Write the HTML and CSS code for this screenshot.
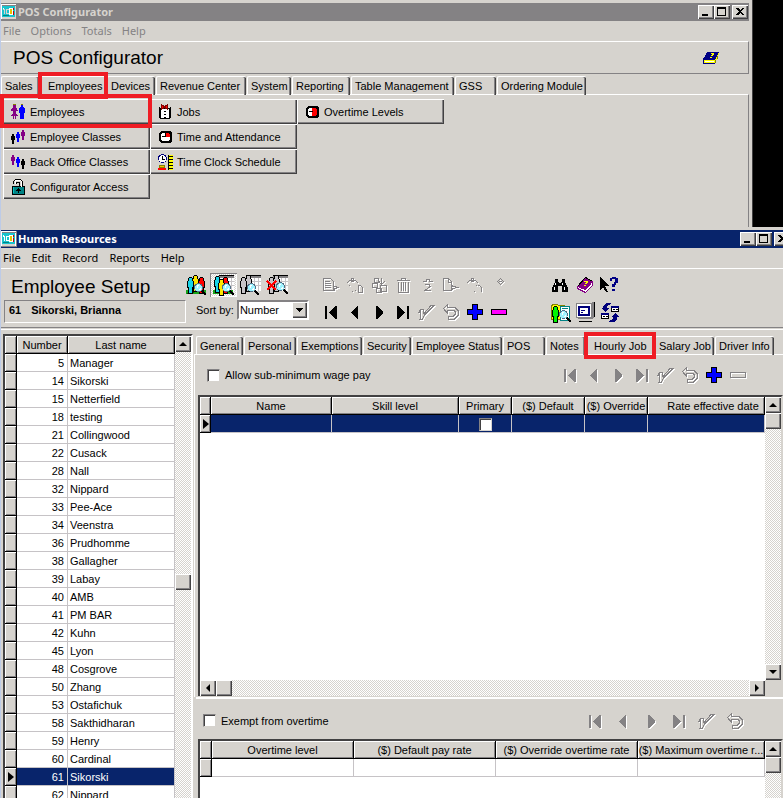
FILE: index.html
```html
<!DOCTYPE html>
<html lang="en">
<head>
<meta charset="utf-8">
<title>POS Configurator</title>
<link rel="stylesheet" href="styles.css">
</head>
<body>
<svg class="sprite" aria-hidden="true">
  <symbol id="app" viewBox="0 0 16 16"><path fill="#848284" d="M0 0h16v16H0z"/><path fill="#fff" d="M0 0h15v1H1v14H0z"/><path fill="#18c3ce" d="M1 2h13v11H1z"/><path fill="#d6d3ce" d="M1 13h13v2H1z"/><path d="M14 2h1v13h-1zM2 5h2v5H3V6H2zM5 5h3v1H6v3h2v1H5z"/><path fill="#fff" d="M2 4h1v1H2zM8 4h4v7H8z"/><path fill="#e7c300" d="M9 5h2v5H9z"/><path fill="#c00" d="M12 4h1v2h-1zM12 7h1v4h-1z"/><path fill="#008284" d="M2 11h6v1H2z"/></symbol>
  <symbol id="first" viewBox="0 0 24 24"><path d="M6 6h2v13H6zM18 6v13h-1l-7-6v-1l7-6z"/></symbol>
  <symbol id="prev" viewBox="0 0 24 24"><path d="M15 6v13h-1l-6-6v-1l6-6z"/></symbol>
  <symbol id="next" viewBox="0 0 24 24"><path d="M9 6v13h1l6-6v-1l-6-6z"/></symbol>
  <symbol id="last" viewBox="0 0 24 24"><path d="M16 6h2v13h-2zM6 6v13h1l7-6v-1L7 6z"/></symbol>
  <symbol id="check" viewBox="0 0 24 24"><path fill="none" stroke="currentColor" d="M4.500 10.500l2-1h2l.5 4 7-8h3l-9 9-3 5h-2l1-8-2 1z"/></symbol>
  <symbol id="undo" viewBox="0 0 24 24"><path fill="none" stroke="currentColor" d="M4.500 8.500l4-4v2.500h7l4 4v4l-4 4h-6v-3h5l2-2v-2l-1.500-1.500h-6.500v3z"/></symbol>
  <symbol id="plus" viewBox="0 0 24 24"><path fill="#0000ff" stroke="#000" d="M9.500 4.500h5v5h5v5h-5v5h-5v-5h-5v-5h5z"/></symbol>
  <symbol id="minus" viewBox="0 0 24 24"><path fill="#ff00ff" stroke="#000" d="M4.500 9.500h15v5h-15z"/></symbol>
  <symbol id="minus-off" viewBox="0 0 24 24"><path fill="none" stroke="currentColor" d="M4.500 9.500h15v5h-15z"/></symbol>
  <symbol id="body" viewBox="0 0 7 17"><path fill="#000" d="M2 0h3v1h1v3h1v7H6v6H1v-6H0V4h1V1h1z"/><path fill="currentColor" d="M2 1h3v3h1v6H5v6H2v-6H1V4h1z"/></symbol>
  <symbol id="lens" viewBox="0 0 12 12"><path d="M8 7l4 4-1 1-4-4z" fill="#000" stroke="#000"/><circle cx="4.500" cy="4.500" r="4" fill="#9ff3ff" stroke="#526d84"/><path fill="#fff" d="M3 2h2v1H4v2H3zM6 5h1v2H5V6h1z"/></symbol>
  <symbol id="sheet" viewBox="0 0 15 16"><path fill="#fff" d="M0 0h15v16H0z"/><path fill="#848284" d="M0 0h15v3H0z"/><path fill="#000" d="M0 0h15v1H0z"/><path fill="#c6c3c6" d="M0 6h15v1H0zM0 10h15v1H0zM4 3h1v13H4zM8 3h1v13H8zM12 3h1v13h-1z"/></symbol>
</svg>

<section class="window configurator">
  <header class="titlebar titlebar-off">
    <svg class="app-icon"><use href="#app"/></svg><h1>POS Configurator</h1>
    <div class="window-buttons">
      <button aria-label="Minimize"><svg viewBox="0 0 11 10"><path d="M2 7h6v2H2z"/></svg></button><button aria-label="Maximize"><svg viewBox="0 0 11 10"><path d="M1 0h9v9H1zM2 2v6h7V2z" fill-rule="evenodd"/></svg></button><button class="close" aria-label="Close"><svg viewBox="0 0 11 10"><path d="M2 1h2l2 2 2-2h2L7 4.500 10 8H8L6 6 4 8H2l3-3.500z"/></svg></button>
    </div>
  </header>
  <nav class="menu menu-off"><a href="#">File</a><a href="#">Options</a><a href="#">Totals</a><a href="#">Help</a></nav>
  <div class="heading">
    <h2>POS Configurator</h2>
    <button class="tool" aria-label="Help topics"><svg viewBox="0 0 24 24"><path fill="#000084" d="M9 6h11l-4 8H5z"/><path fill="#ffff00" d="M5 14h11l4-8v2l-4 9H5z"/><path fill="#fff" d="M6 15h9v1H6z"/><path fill="none" stroke="#000084" d="M4.500 17.500v-4l4-7M5 17.500h11"/><path fill="#ffff00" d="M11 8h1V7h3v2h-1v1h-2V9h1V8h-2zM11 11h2v1h-2z"/><path fill="#848200" d="M18 10h1v3h-1zM16 14h1v3h-1z"/></svg></button>
  </div>
  <div class="tabs config-tabs" role="tablist">
    <button role="tab">Sales</button><button role="tab" class="selected marked">Employees</button><button role="tab">Devices</button><button role="tab">Revenue Center</button><button role="tab">System</button><button role="tab">Reporting</button><button role="tab">Table Management</button><button role="tab">GSS</button><button role="tab">Ordering Module</button>
  </div>
  <div class="config-page">
    <div class="commands">
      <button class="marked"><svg viewBox="0 0 16 16"><g fill="#840084"><path d="M3 1h3v3H3zM2 4h5l1 3H1zM3 7h3v2l2 3H1l2-3zM3 12h1v3H3zM5 12h1v3H5z"/></g><path fill="#848200" d="M3 0h3v1H3zM11 0h2v1h-2z"/><path fill="#00f" d="M11 1h2v2h1v1h1v5h-1v6h-4V9H9V4h1V3h1z"/></svg>Employees</button>
      <button><svg viewBox="0 0 16 16"><path d="M2 5h2v2h1v4H4v4H2v-4H1V7h1z"/><path fill="#00f" d="M7 3h2v2h1v4H9v4H7V9H6V5h1z"/><path fill="#840084" d="M12 1h2v2h1v4h-1v4h-2V7h-1V3h1z"/></svg>Employee Classes</button>
      <button><svg viewBox="0 0 16 16"><path fill="#840084" d="M2 1h2v2h1v4H4v4H2V7H1V3h1z"/><path fill="#00f" d="M7 3h2v2h1v4H9v4H7V9H6V5h1z"/><path d="M12 5h2v2h1v4h-1v4h-2v-4h-1V7h1z"/></svg>Back Office Classes</button>
      <button><svg viewBox="0 0 16 16"><path fill="#008284" stroke="#000" d="M2.500 7.500h12v8h-12z"/><path fill="none" stroke="#000" d="M3.500 5V2.500l2-2h5l2 2v5M6.500 5V3.500h3v4"/><path fill="none" stroke="#fff" d="M5 5V2.500l1-1h4l1.500 1v5"/><path d="M8 9h1l2 3H9v2H8v-2H6z"/><path fill="#00c3c6" d="M3 8h1v6H3z"/></svg>Configurator Access</button>
      <button><svg viewBox="0 0 16 16"><path fill="#fff" stroke="#000" d="M3.500 4.500h9v10h-9z"/><path d="M2 3h1v11H2zM13 3h1v11h-1zM7 7h2v1H7zM7 10h2v1H7zM7 13h2v1H7z"/><path fill="red" stroke="#840000" d="M4.500 1l3 1.500 3-1.500v4l-3-1.500-3 1.500z"/></svg>Jobs</button>
      <button><svg viewBox="0 0 16 16"><path d="M4 2h9l2 2v8l-2 2H4l-2-2V4z"/><path fill="#fff" d="M5 4h3v4h5v2l-2 2H5l-1-2V6z"/><path fill="red" d="M9 4h2l2 2v2H9z"/><path d="M5 7h4v1H5z"/></svg>Time and Attendance</button>
      <button><svg viewBox="0 0 16 16"><circle cx="5.500" cy="4.500" r="4" fill="#fff" stroke="#00007b"/><path d="M5.500 2v3H8" fill="none" stroke="#000"/><path fill="#ffff00" d="M12 1h4v15h-4z"/><path d="M12 2h4v1h-4zM12 5h4v1h-4zM12 8h4v1h-4zM12 11h4v1h-4zM12 14h4v1h-4zM11 1h1v15h-1z"/><path fill="#ffc300" stroke="#848200" d="M2.500 11.500h5v2h-5z"/><path fill="red" d="M1 14h8v2H1z"/></svg>Time Clock Schedule</button>
      <button><svg viewBox="0 0 16 16"><path d="M4 2h9l2 2v8l-2 2H4l-2-2V4z"/><path fill="#fff" d="M5 4h3v8H5l-1-2V6z"/><path fill="red" d="M8 4h3l2 2v4l-2 2H8z"/><path d="M5 7h4v1H5z"/></svg>Overtime Levels</button>
    </div>
  </div>
</section>

<section class="window human-resources">
  <header class="titlebar">
    <svg class="app-icon"><use href="#app"/></svg><h1>Human Resources</h1>
    <div class="window-buttons">
      <button aria-label="Minimize"><svg viewBox="0 0 11 10"><path d="M2 7h6v2H2z"/></svg></button><button aria-label="Maximize"><svg viewBox="0 0 11 10"><path d="M1 0h9v9H1zM2 2v6h7V2z" fill-rule="evenodd"/></svg></button><button class="close" aria-label="Close"><svg viewBox="0 0 11 10"><path d="M2 1h2l2 2 2-2h2L7 4.500 10 8H8L6 6 4 8H2l3-3.500z"/></svg></button>
    </div>
  </header>
  <nav class="menu"><a href="#">File</a><a href="#">Edit</a><a href="#">Record</a><a href="#">Reports</a><a href="#">Help</a></nav>

  <div class="toolbar">
    <div class="record">
      <h2>Employee Setup</h2>
      <p class="record-name"><b>61</b><b>Sikorski, Brianna</b></p>
    </div>
    <div class="filters">
      <div class="filter-buttons">
        <button aria-label="All employees"><svg viewBox="0 0 22 22"><path fill="#18a218" d="M1 16h20v4H1z"/><path fill="#005100" d="M2 19h2v1H2zM7 18h2v1H7zM17 19h3v1h-3z"/><use href="#body" x="7" y="1" width="7" height="17" color="#ffe700"/><use href="#body" x="13" y="3" width="7" height="17" color="#f00"/><use href="#body" x="2" y="3" width="7" height="17" color="#18d3e7"/><use href="#lens" x="9" y="9" width="12" height="12"/></svg></button>
        <button class="pressed" aria-label="Active employees"><svg viewBox="0 0 22 22"><use href="#sheet" x="7" y="1" width="15" height="16"/><path fill="#18a218" d="M1 16h20v4H1z"/><use href="#body" x="10" y="3" width="7" height="17" color="#f00"/><use href="#body" x="2" y="2" width="7" height="17" color="#18d3e7"/><use href="#body" x="6" y="5" width="7" height="17" color="#ffe700"/><use href="#lens" x="10" y="9" width="12" height="12"/></svg></button>
        <button aria-label="Inactive employees"><svg viewBox="0 0 22 22"><use href="#sheet" x="7" y="1" width="15" height="16"/><use href="#body" x="6" y="1" width="7" height="17" color="#c6c3c6"/><use href="#body" x="1" y="3" width="7" height="17" color="#c6c3c6"/><use href="#lens" x="8" y="9" width="12" height="12"/></svg></button>
        <button aria-label="Terminated employees"><svg viewBox="0 0 22 22"><use href="#sheet" x="7" y="1" width="15" height="16"/><use href="#body" x="7" y="1" width="7" height="17" color="#c6c3c6"/><use href="#body" x="2" y="3" width="7" height="17" color="#c6c3c6"/><use href="#lens" x="10" y="8" width="12" height="12"/><path fill="none" stroke="red" stroke-width="2.500" d="M1 7l9 9M10 7l-9 9"/></svg></button>
      </div>
      <div class="sort"><label for="sort">Sort by:</label><span class="combo"><select id="sort"><option>Number</option></select></span></div>
    </div>
    <div class="tool-grid record-tools">
      <button class="tool off" aria-label="Copy"><svg viewBox="0 0 24 24"><path fill="none" stroke="currentColor" d="M4.500 5.500h7l3 3v9h-10zM6 8.500h5M6 10.500h6M6 12.500h6M6 14.500h6M14 12.500l5 2-3 1-1 2"/></svg></button>
      <button class="tool off" aria-label="Copy employee"><svg viewBox="0 0 24 24"><path fill="none" stroke="currentColor" d="M4 9.500l3-2 2 1 3-1 3 2M8.500 5.500h2v2h-2zM15.500 12.500h2l2 2v5h-4zM6 12.500h1M9 18.500h1M12 17.500h1"/></svg></button>
      <button class="tool off" aria-label="Combine"><svg viewBox="0 0 24 24"><path fill="none" stroke="currentColor" d="M7.500 5.500h4v4h-4zM14.500 5v6M12 8.500l2.500 3 3-3M5.500 10.500h5v4h-5zM13.500 12.500h6v6h-6zM9.500 15.500h5v4h-5z"/></svg></button>
      <button class="tool off" aria-label="Delete"><svg viewBox="0 0 24 24"><path fill="none" stroke="currentColor" d="M6 7.500h13M10.500 7V5.500h4V7M7.500 9v10.500h10V9M10.500 9v9M12.500 9v9M14.500 9v9"/></svg></button>
      <button class="tool off" aria-label="Duplicate"><svg viewBox="0 0 24 24"><path fill="none" stroke="currentColor" d="M8 8.500h3l1-2h2l1 2h3M10 11.500h4l1 2-5 4h6"/></svg></button>
      <button class="tool off" aria-label="New page"><svg viewBox="0 0 24 24"><path fill="none" stroke="currentColor" d="M4.500 5.500h5l3 3v9h-8zM9.500 6v3h3M12 12.500l6 2-4 1-2 2"/></svg></button>
      <button class="tool off" aria-label="Transfer"><svg viewBox="0 0 24 24"><path fill="none" stroke="currentColor" d="M4 9.500l3-2 2 1 3-1 3 2M8.500 5.500h2v2h-2zM14.500 12.500h2l2 2v4M11 18.500h1M13 12.500h1"/></svg></button>
      <button class="tool off" aria-label="Mark"><svg viewBox="0 0 24 24"><path fill="none" stroke="currentColor" d="M10.500 8.500l3-3 3 3-3 3zM12 8.500h3"/></svg></button>
      <button class="tool" aria-label="First"><svg><use href="#first"/></svg></button><button class="tool" aria-label="Previous"><svg><use href="#prev"/></svg></button><button class="tool" aria-label="Next"><svg><use href="#next"/></svg></button><button class="tool" aria-label="Last"><svg><use href="#last"/></svg></button><button class="tool off" aria-label="Save"><svg><use href="#check"/></svg></button><button class="tool off" aria-label="Undo"><svg><use href="#undo"/></svg></button><button class="tool" aria-label="Add"><svg><use href="#plus"/></svg></button><button class="tool" aria-label="Remove"><svg><use href="#minus"/></svg></button>
    </div>
    <div class="tool-grid window-tools">
      <button class="tool" aria-label="Find"><svg viewBox="0 0 24 24"><path d="M7 6h3v3h1v1h2V9h1V6h3v3l3 6v4h-6v-6h-4v6H4v-4l3-6z"/><path fill="#fff" d="M7 10h1v2H7zM6 14h1v3H6zM14 10h1v2h-1zM16 14h1v3h-1z"/></svg></button>
      <button class="tool" aria-label="Manual"><svg viewBox="0 0 24 24"><path fill="#840084" stroke="#000" d="M4.500 13.500l8-9 7 4-7 8z"/><path fill="#fff" stroke="#840084" d="M4.500 13.500l8 3 7-8v4l-7 7-8-4z"/><path fill="#ffff00" d="M10 9h1V8h4v2h-1v1h-2v-1h1V9h-3zM11 12h2v1h-2z"/></svg></button>
      <button class="tool" aria-label="What's this?"><svg viewBox="0 0 24 24"><path d="M2 4l9 9H7l3 6H8l-3-5-3 3z"/><path fill="#000084" d="M12 5h2V4h4v1h2v5h-2v2h-1v2h-3v-3h2V9h1V6h-3v2h-2zM14 16h3v2h-3z"/></svg></button>
      <button class="tool" aria-label="Employee lookup"><svg viewBox="0 0 24 24"><path fill="#ffff00" stroke="#848200" d="M3.500 19V5.500l2-1h4l1 1h6V19z"/><path fill="#fff" stroke="#008284" d="M12.500 6.500h9v14h-9z"/><path fill="#008284" d="M14 8h6v1h-6z"/><use href="#body" x="4" y="6" width="7" height="17" color="#00f300"/><use href="#lens" x="11" y="10" width="12" height="12"/></svg></button>
      <button class="tool" aria-label="Workstation"><svg viewBox="0 0 24 24"><path fill="#fff" stroke="#848284" d="M3.500 3.500h15v14h-15z"/><path fill="#848284" d="M19 2h2v15l-2 2H5v-1h14z"/><path d="M21 2h1v15h-1zM6 21h13v1H6z"/><path fill="#d6d3ce" d="M7 19h11v2H7z"/><path fill="#fff" stroke="#00007b" stroke-width="2" d="M6 7h10v8H6z"/><path fill="#00007b" d="M5 6h12v2H5zM8 10h4v1H8zM8 12h2v1H8z"/></svg></button>
      <button class="tool" aria-label="Refresh"><svg viewBox="0 0 24 24"><path fill="#fff" stroke="#000" d="M13.500 6.500h7v5h-7zM3.500 13.500h7v5h-7z"/><path d="M15 9h2v1h-2zM18 9h2v1h-2zM5 16h2v1H5zM8 16h2v1H8z"/><path fill="#00007b" d="M13 6h8v2h-8zM3 13h8v2H3zM5 6l3-3h5v1l-4 2v2h2l-4 4-4-4h2zM19 19l-3 3h-5v-1l4-2v-2h-2l4-4 4 4h-2z"/></svg></button>
    </div>
  </div>

  <div class="workspace">
    <aside class="employee-list">
      <table class="grid list">
        <colgroup><col class="mark"><col class="number"><col class="name"></colgroup>
        <thead><tr><th></th><th>Number</th><th>Last name</th></tr></thead>
        <tbody>
          <tr><th></th><td>5</td><td>Manager</td></tr>
          <tr><th></th><td>14</td><td>Sikorski</td></tr>
          <tr><th></th><td>15</td><td>Netterfield</td></tr>
          <tr><th></th><td>18</td><td>testing</td></tr>
          <tr><th></th><td>21</td><td>Collingwood</td></tr>
          <tr><th></th><td>22</td><td>Cusack</td></tr>
          <tr><th></th><td>28</td><td>Nall</td></tr>
          <tr><th></th><td>32</td><td>Nippard</td></tr>
          <tr><th></th><td>33</td><td>Pee-Ace</td></tr>
          <tr><th></th><td>34</td><td>Veenstra</td></tr>
          <tr><th></th><td>36</td><td>Prudhomme</td></tr>
          <tr><th></th><td>38</td><td>Gallagher</td></tr>
          <tr><th></th><td>39</td><td>Labay</td></tr>
          <tr><th></th><td>40</td><td>AMB</td></tr>
          <tr><th></th><td>41</td><td>PM BAR</td></tr>
          <tr><th></th><td>42</td><td>Kuhn</td></tr>
          <tr><th></th><td>45</td><td>Lyon</td></tr>
          <tr><th></th><td>48</td><td>Cosgrove</td></tr>
          <tr><th></th><td>50</td><td>Zhang</td></tr>
          <tr><th></th><td>53</td><td>Ostafichuk</td></tr>
          <tr><th></th><td>58</td><td>Sakthidharan</td></tr>
          <tr><th></th><td>59</td><td>Henry</td></tr>
          <tr><th></th><td>60</td><td>Cardinal</td></tr>
          <tr class="current"><th></th><td>61</td><td>Sikorski</td></tr>
          <tr><th></th><td>62</td><td>Nippard</td></tr>
        </tbody>
      </table>
      <div class="scroll"><button class="up" aria-label="Scroll up"></button><span class="before"></span><span class="thumb"></span><span class="after"></span></div>
    </aside>

    <main class="details">
      <div class="tabs detail-tabs" role="tablist">
        <button role="tab">General</button><button role="tab">Personal</button><button role="tab">Exemptions</button><button role="tab">Security</button><button role="tab">Employee Status</button><button role="tab">POS</button><button role="tab">Notes</button><button role="tab" class="selected marked">Hourly Job</button><button role="tab">Salary Job</button><button role="tab">Driver Info</button>
      </div>
      <div class="jobs">
        <div class="bar">
          <label><input type="checkbox">Allow sub-minimum wage pay</label>
          <div class="bar-tools">
            <button class="tool off" aria-label="First"><svg><use href="#first"/></svg></button><button class="tool off" aria-label="Previous"><svg><use href="#prev"/></svg></button><button class="tool off" aria-label="Next"><svg><use href="#next"/></svg></button><button class="tool off" aria-label="Last"><svg><use href="#last"/></svg></button><button class="tool off" aria-label="Save"><svg><use href="#check"/></svg></button><button class="tool off" aria-label="Undo"><svg><use href="#undo"/></svg></button><button class="tool" aria-label="Add"><svg><use href="#plus"/></svg></button><button class="tool off" aria-label="Remove"><svg><use href="#minus-off"/></svg></button>
          </div>
        </div>
        <div class="sheet job-sheet">
          <div class="sheet-body">
            <table class="grid job-grid">
              <colgroup><col class="mark"><col class="job"><col class="skill"><col class="primary"><col class="default"><col class="override"><col></colgroup>
              <thead><tr><th></th><th>Name</th><th>Skill level</th><th>Primary</th><th>($) Default</th><th>($) Override</th><th class="date">Rate effective date</th></tr></thead>
              <tbody><tr class="current"><th></th><td></td><td></td><td class="center"><input type="checkbox" aria-label="Primary"></td><td></td><td></td><td></td></tr></tbody>
            </table>
          </div>
          <div class="scroll"><button class="up" aria-label="Scroll up"></button><span class="thumb"></span><span class="after"></span><button class="down" aria-label="Scroll down"></button></div>
          <div class="scroll across"><button class="left" aria-label="Scroll left"></button><span class="thumb"></span><span class="after"></span><button class="right" aria-label="Scroll right"></button></div>
        </div>
      </div>
      <div class="overtime">
        <div class="bar">
          <label><input type="checkbox">Exempt from overtime</label>
          <div class="bar-tools">
            <button class="tool off" aria-label="First"><svg><use href="#first"/></svg></button><button class="tool off" aria-label="Previous"><svg><use href="#prev"/></svg></button><button class="tool off" aria-label="Next"><svg><use href="#next"/></svg></button><button class="tool off" aria-label="Last"><svg><use href="#last"/></svg></button><button class="tool off" aria-label="Save"><svg><use href="#check"/></svg></button><button class="tool off" aria-label="Undo"><svg><use href="#undo"/></svg></button>
          </div>
        </div>
        <div class="sheet">
          <div class="sheet-body">
            <table class="grid overtime-grid">
              <colgroup><col class="mark"><col class="rate"><col class="rate"><col class="rate"><col></colgroup>
              <thead><tr><th></th><th>Overtime level</th><th>($) Default pay rate</th><th>($) Override overtime rate</th><th>($) Maximum overtime r...</th></tr></thead>
              <tbody><tr><th></th><td></td><td></td><td></td><td></td></tr></tbody>
            </table>
          </div>
          <div class="scroll"><button class="up" aria-label="Scroll up"></button><span class="thumb"></span><span class="after"></span></div>
        </div>
      </div>
    </main>
  </div>
</section>
</body>
</html>
```
FILE: styles.css
```css
:root {
  --face: #d6d3ce;
  --shade: #848284;
  --dark: #424142;
  --navy: #08246b;
  --line: #c6c3c6;
  --red: #ef1c24;
}

* { box-sizing: border-box; }

body {
  margin: 0;
  height: 100vh;
  display: flex;
  flex-direction: column;
  overflow: hidden;
  background: #000;
  color: #000;
  font: 11px/16px "Liberation Sans", Arial, sans-serif;
}

h1, h2, p { margin: 0; }
button, select, input { font: inherit; color: inherit; margin: 0; }
button { padding: 0; border: 0; background: none; text-align: left; white-space: nowrap; }
svg { display: block; fill: currentColor; shape-rendering: crispEdges; }
.sprite { position: absolute; width: 0; height: 0; }

/* Window frame */
.window { background: var(--face); border-left: 1px solid #bdcbe7; }
.configurator {
  flex: 0 0 227px;
  display: flex;
  flex-direction: column;
  margin-right: 30px;
  padding-right: 3px;
  border-right: 1px solid var(--dark);
}
.human-resources {
  flex: 1;
  min-height: 0;
  display: flex;
  flex-direction: column;
}
.titlebar {
  flex: none;
  display: flex;
  align-items: center;
  height: 21px;
  border-top: 3px solid var(--face);
  background: var(--navy);
  color: #fff;
}
.titlebar-off { background: var(--shade); color: var(--face); }
.human-resources { box-shadow: inset 0 1px #fff; }
.titlebar h1 { flex: 1; font: bold 11px/16px "Noto Sans", sans-serif; }
.app-icon { width: 16px; height: 16px; margin-right: 1px; }
.window-buttons { display: flex; padding-right: 1px; }
.human-resources .window-buttons { margin-right: -8px; }
.window-buttons button {
  width: 16px;
  height: 14px;
  padding: 1px 2px;
  background: var(--face);
  color: #000;
  box-shadow: inset 1px 1px #fff, inset -1px -1px var(--dark), inset -2px -2px var(--shade);
}
.window-buttons svg { width: 11px; height: 10px; }
.window-buttons .close { margin-left: 2px; }

.menu {
  flex: none;
  display: flex;
  gap: 11px;
  height: 20px;
  padding-left: 2px;
  font: 11px/20px "Noto Sans", sans-serif;
}
.menu a { color: inherit; text-decoration: none; }
.menu-off { gap: 10px; color: var(--shade); }

.heading {
  flex: none;
  display: flex;
  align-items: center;
  justify-content: space-between;
  height: 33px;
  margin-bottom: 2px;
  padding: 0 25px 0 12px;
  border: 1px solid var(--shade);
  border-top-color: #fff;
  border-left: 0;
}
h2 { font: 19px/24px "Liberation Sans", Arial, sans-serif; }

.tool { width: 24px; height: 24px; }
.tool svg { width: 24px; height: 24px; }
.off { color: var(--shade); }
.off svg { filter: drop-shadow(1px 1px 0 #fff); }

/* Tabs */
.tabs { flex: none; display: grid; height: 18px; }
.tabs button {
  position: relative;
  margin-right: 1px;
  padding-left: 3px;
  line-height: 18px;
  border-top: 1px solid #fff;
  border-left: 1px solid #fff;
  border-radius: 2px 2px 0 0;
  box-shadow: inset -1px 0 var(--dark), inset -2px 0 var(--shade);
}
.tabs .selected { line-height: 14px; padding-left: 7px; box-shadow: none; }
.config-tabs { grid-template-columns: 39px 67px 49px 91px 45px 59px 104px 42px 90px; }
.detail-tabs {
  grid-template-columns: 48px 53px 66px 49px 91px 43px 40px 69px 60px 60px;
  padding-left: 3px;
}

.marked { position: relative; }
.marked::after {
  content: "";
  position: absolute;
  z-index: 1;
  inset: -5px -2px -4px -3px;
  border: 4px solid var(--red);
  pointer-events: none;
}

/* Configurator commands */
.config-page {
  flex: 1;
  padding: 4px 0 0 2px;
  border-top: 1px solid #fff;
  border-right: 1px solid var(--shade);
}
.commands {
  display: grid;
  grid-template: repeat(4, 25px) / repeat(3, 147px);
  grid-auto-flow: column;
}
.commands button:nth-of-type(8) { grid-area: 1 / 3; }
.commands button {
  display: flex;
  align-items: center;
  gap: 4px;
  padding: 1px 0 0 7px;
  box-shadow: inset 1px 1px #fff, inset -1px -1px var(--dark), inset -2px -2px var(--shade);
}
.commands svg { width: 16px; height: 16px; }

/* Toolbar */
.toolbar {
  flex: none;
  display: flex;
  height: 60px;
  padding-top: 4px;
  border-top: 1px solid #fff;
  border-bottom: 1px solid var(--shade);
}
.record { width: 182px; padding: 2px 0 0 3px; }
.record h2 { padding: 0 0 1px 7px; }
.record-name {
  display: flex;
  gap: 10px;
  height: 23px;
  margin-right: -3px;
  padding-left: 4px;
  line-height: 18px;
  border: 1px solid #fff;
  border-top-color: var(--shade);
  border-left-color: var(--shade);
}
.filters { width: 136px; }
.filter-buttons { display: flex; }
.filter-buttons button { width: 27px; height: 24px; padding: 1px 2px; }
.filter-buttons svg { width: 22px; height: 22px; }
.filter-buttons .pressed {
  background: repeating-conic-gradient(#fff 0 25%, var(--face) 0 50%) 0 0 / 2px 2px;
  box-shadow: inset 1px 1px var(--shade), inset -1px -1px #fff;
}
.sort { display: flex; align-items: center; gap: 3px; padding: 3px 0 0 13px; }
.combo { position: relative; width: 72px; height: 20px; }
.combo select {
  appearance: none;
  width: 100%;
  height: 100%;
  padding: 0 0 0 1px;
  border: 2px solid #fff;
  border-top-color: var(--shade);
  border-left-color: var(--shade);
  border-radius: 0;
  background: #fff;
}
.combo::after {
  content: "";
  position: absolute;
  top: 2px;
  right: 2px;
  width: 15px;
  height: 16px;
  background: linear-gradient(#000, #000) 4px 6px / 7px 1px no-repeat, linear-gradient(#000, #000) 5px 7px / 5px 1px no-repeat, linear-gradient(#000, #000) 6px 8px / 3px 1px no-repeat, linear-gradient(#000, #000) 7px 9px / 1px 1px no-repeat, var(--face);
  box-shadow: inset 1px 1px #fff, inset -1px -1px var(--dark), inset -2px -2px var(--shade);
  pointer-events: none;
}
.tool-grid { display: grid; align-content: start; row-gap: 3px; }
.record-tools { grid-template-columns: repeat(8, 24px); }
.window-tools { grid-template-columns: repeat(3, 25px); margin-left: 37px; }

/* Workspace */
.workspace {
  flex: 1;
  min-height: 0;
  display: flex;
  margin-top: 1px;
  border-top: 1px solid #fff;
}
.employee-list {
  flex: none;
  display: flex;
  margin: 4px 0 0 2px;
  border: 2px solid var(--dark);
  border-right: 2px solid #fff;
  border-bottom: 0;
  overflow: hidden;
}

.grid { border-collapse: separate; border-spacing: 0; table-layout: fixed; background: #fff; }
.grid tr { height: 18px; }
.grid th, .grid td {
  height: 18px;
  padding: 1px 0 0;
  font-weight: normal;
  line-height: 16px;
  white-space: nowrap;
  overflow: hidden;
}
.grid th {
  background: var(--face);
  border: solid #000;
  border-width: 0 1px 1px 0;
  box-shadow: inset 1px 1px #fff, inset -1px -1px var(--shade);
}
.grid td { border: solid var(--line); border-width: 0 1px 1px 0; }
.current td { background: var(--navy); color: #fff; }
.current th::before {
  content: "";
  display: block;
  width: 0;
  margin-left: 3px;
  border: solid transparent;
  border-width: 5px 0 5px 6px;
  border-left-color: #000;
}
.mark { width: 12px; }
.number { width: 51px; }
.name { width: 107px; }
.list { width: 170px; align-self: flex-start; }
.list td:nth-child(2) { padding-right: 3px; text-align: right; }
.list td:nth-child(3) { padding-left: 2px; }

.scroll {
  display: flex;
  flex-direction: column;
  width: 16px;
  background: repeating-conic-gradient(#fff 0 25%, var(--face) 0 50%) 0 0 / 2px 2px;
}
.across { flex-direction: row; width: auto; height: 16px; }
.scroll button, .thumb {
  flex: none;
  display: grid;
  place-items: center;
  width: 16px;
  height: 16px;
  background: var(--face);
  box-shadow: inset 1px 1px #fff, inset -1px -1px var(--dark), inset -2px -2px var(--shade);
}
.before { flex: 222; }
.after { flex: 208; }
.scroll button::before { content: ""; border: 4px solid transparent; }
.scroll .up::before { border-top: 0; border-bottom-color: #000; }
.scroll .down::before { border-bottom: 0; border-top-color: #000; }
.scroll .left::before { border-left: 0; border-right-color: #000; }
.scroll .right::before { border-right: 0; border-left-color: #000; }

.details {
  flex: 1;
  min-width: 0;
  display: flex;
  flex-direction: column;
  padding-top: 6px;
}
.jobs {
  flex: 1;
  min-height: 0;
  display: flex;
  flex-direction: column;
  margin-left: 1px;
  padding: 0 0 1px 3px;
  border-top: 1px solid #fff;
  border-left: 1px solid #fff;
}
.bar { flex: none; display: flex; align-items: center; justify-content: space-between; height: 40px; }
.bar label { display: flex; align-items: center; gap: 5px; }
.bar-tools { display: flex; }
.jobs .bar { padding: 0 33px 0 9px; }
.overtime .bar { padding: 3px 36px 0 5px; }
.overtime .bar-tools { gap: 4px; }

input[type="checkbox"] {
  appearance: none;
  width: 13px;
  height: 13px;
  background: #fff;
  border: 1px solid var(--face);
  border-top-color: var(--shade);
  border-left-color: var(--shade);
  box-shadow: inset 1px 1px var(--dark);
}

.sheet {
  flex: 1;
  min-height: 0;
  display: grid;
  grid-template: 1fr / 1fr 16px;
  border: 2px solid var(--dark);
  border-right-color: var(--face);
  border-bottom: 0;
}
.job-sheet { grid-template-rows: 1fr 16px; background: var(--face); }
.sheet-body { background: #fff; overflow: hidden; }
.sheet .grid { width: 100%; }
.job-grid .mark { width: 11px; }
.job { width: 121px; }
.skill { width: 127px; }
.primary { width: 53px; }
.default { width: 73px; }
.override { width: 63px; }
.rate { width: 142px; }
.job-grid .date { padding-left: 14px; }
.center { text-align: center; }
.center input { display: block; margin: 0 auto; }

.overtime {
  flex: 0 0 101px;
  display: flex;
  flex-direction: column;
  margin-left: 3px;
  padding: 0 0 0 2px;
  border-top: 2px solid #fff;
}
```
